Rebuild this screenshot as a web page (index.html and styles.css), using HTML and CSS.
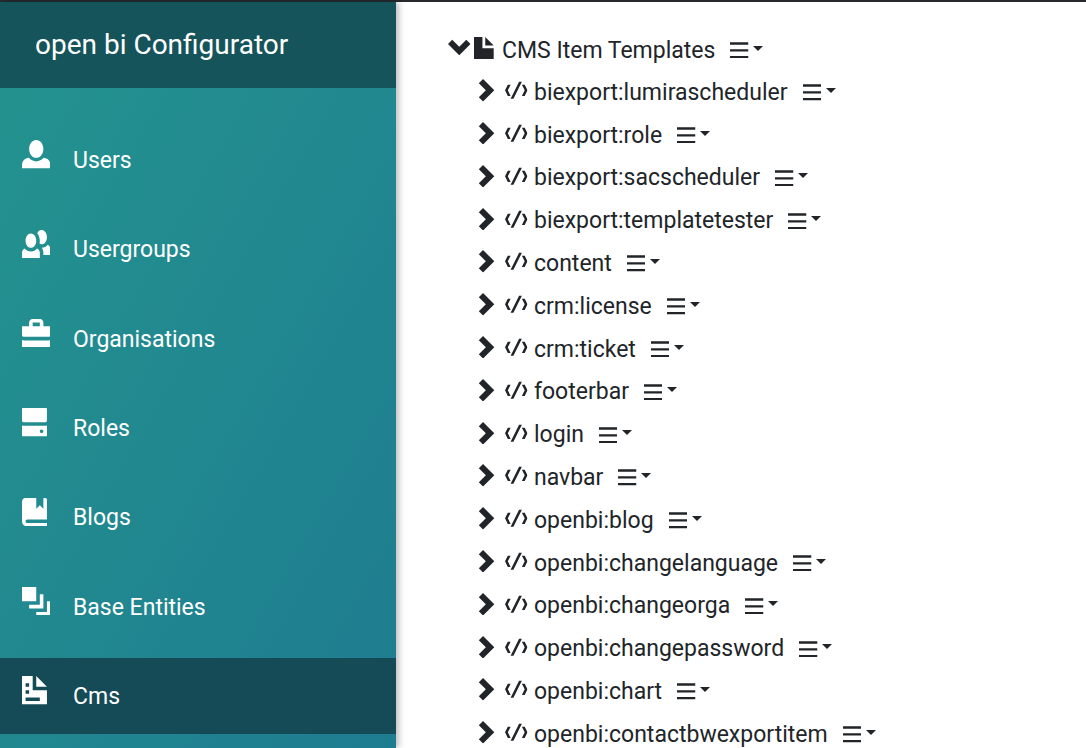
FILE: index.html
```html
<!DOCTYPE html>
<html lang="en">
<head>
    <meta charset="UTF-8">
    <meta name="viewport" content="width=device-width, initial-scale=1.0">
    <title>open bi Configurator</title>
    <link rel="stylesheet" href="styles.css">
</head>
<body>
    <svg class="icon-defs" aria-hidden="true">
        <symbol id="i-person" viewBox="0 0 8 8"><path d="M4 0c-1.1 0-2 1.12-2 2.5s.9 2.5 2 2.5 2-1.12 2-2.5-.9-2.5-2-2.5zm-2.09 5c-1.06.05-1.91.92-1.91 2v1h8v-1c0-1.08-.84-1.95-1.91-2-.54.61-1.28 1-2.09 1-.81 0-1.55-.39-2.09-1z"/></symbol>
        <symbol id="i-people" viewBox="0 0 8 8"><path d="M5.5 0c-.51 0-.95.35-1.22.88.45.54.72 1.28.72 2.13 0 .29-.03.55-.09.81.17.11.38.19.59.19.83 0 1.5-.9 1.5-2s-.67-2-1.5-2zm-3 1c-.83 0-1.5.9-1.5 2s.67 2 1.5 2 1.5-.9 1.5-2-.67-2-1.5-2zm4.75 3.16c-.43.51-1.02.82-1.69.84.27.38.44.84.44 1.34v.66h2v-1.66c0-.52-.31-.97-.75-1.19zm-6.5 1c-.44.22-.75.67-.75 1.19v1.66h5v-1.66c0-.52-.31-.97-.75-1.19-.45.53-1.06.84-1.75.84s-1.3-.32-1.75-.84z"/></symbol>
        <symbol id="i-briefcase" viewBox="0 0 8 8"><path d="M3 0c-.55 0-1 .45-1 1v1h-2v2.5c0 .28.22.5.5.5h7c.28 0 .5-.22.5-.5v-2.5h-2v-1c0-.55-.45-1-1-1h-2zm0 1h2v1h-2v-1zm-3 4.91v2.09h8v-2.09c-.16.06-.32.09-.5.09h-7c-.18 0-.34-.04-.5-.09z"/></symbol>
        <symbol id="i-drive" viewBox="0 0 8 8"><path d="M.19 0c-.11 0-.19.08-.19.19v3.31c0 .28.22.5.5.5h6c.28 0 .5-.22.5-.5v-3.31c0-.11-.08-.19-.19-.19h-6.63zm-.19 4.91v2.91c0 .11.08.19.19.19h6.63c.11 0 .19-.08.19-.19v-2.91c-.16.06-.32.09-.5.09h-6c-.18 0-.34-.04-.5-.09zm5.5 1.09c.28 0 .5.22.5.5s-.22.5-.5.5-.5-.22-.5-.5.22-.5.5-.5z"/></symbol>
        <symbol id="i-book" viewBox="0 0 8 8"><path d="M1 0c-.07 0-.13.01-.19.03-.39.08-.7.39-.78.78-.03.06-.03.12-.03.19v5.5c0 .83.67 1.5 1.5 1.5h5.5v-1h-5.5c-.28 0-.5-.22-.5-.5s.22-.5.5-.5h5.5v-5.5c0-.28-.22-.5-.5-.5h-.5v3l-1-1-1 1v-3h-3z"/></symbol>
        <symbol id="i-layers" viewBox="0 0 8 8"><path d="M0 0v4h4v-4h-4zm5 2v3h-3v1h4v-4h-1zm2 2v3h-3v1h4v-4h-1z"/></symbol>
        <symbol id="i-document" viewBox="0 0 8 8"><path d="M0 0v8h7v-4h-4v-4h-3zm4 0v3h3l-3-3zm-3 2h1v1h-1v-1zm0 2h1v1h-1v-1zm0 2h4v1h-4v-1z"/></symbol>
        <symbol id="i-file" viewBox="0 0 8 8"><path d="M0 0v8h7v-4h-4v-4h-3zm4 0v3h3l-3-3z"/></symbol>
        <symbol id="i-down" viewBox="0 0 8 8"><path d="M1.5 1l-1.5 1.5 4 4 4-4-1.5-1.5-2.5 2.5-2.5-2.5z"/></symbol>
        <symbol id="i-right" viewBox="0 0 8 8"><path d="M2.5 0l-1.5 1.5 2.5 2.5-2.5 2.5 1.5 1.5 4-4-4-4z"/></symbol>
        <symbol id="i-code" viewBox="0 0 8 8"><path d="M5 1l-3 6h1l3-6h-1zm-4 1l-1 2 1 2h1l-1-2 1-2h-1zm5 0l1 2-1 2h1l1-2-1-2h-1z"/></symbol>
        <symbol id="i-menu" viewBox="0 0 8 8"><path d="M0 1v1h8v-1h-8zm0 2.97v1h8v-1h-8zm0 3v1h8v-1h-8z"/></symbol>
    </svg>

    <div class="topline"></div>
    <div class="wrapper">
        <nav class="sidebar">
            <div class="sidebar-header">open bi Configurator</div>
            <ul class="side-menu">
                <li class="side-item"><svg class="side-icon"><use href="#i-person"/></svg>Users</li>
                <li class="side-item"><svg class="side-icon"><use href="#i-people"/></svg>Usergroups</li>
                <li class="side-item"><svg class="side-icon"><use href="#i-briefcase"/></svg>Organisations</li>
                <li class="side-item"><svg class="side-icon"><use href="#i-drive"/></svg>Roles</li>
                <li class="side-item"><svg class="side-icon"><use href="#i-book"/></svg>Blogs</li>
                <li class="side-item"><svg class="side-icon"><use href="#i-layers"/></svg>Base Entities</li>
                <li class="side-item active"><svg class="side-icon"><use href="#i-document"/></svg>Cms</li>
            </ul>
        </nav>

        <main class="content">
            <div class="row root">
                <svg class="ico toggle"><use href="#i-down"/></svg>
                <svg class="ico"><use href="#i-file"/></svg>
                <span class="label">CMS Item Templates</span>
                <span class="menu"><svg class="menu-icon"><use href="#i-menu"/></svg><i class="caret"></i></span>
            </div>
            <ul class="tree">
                <li class="row"><svg class="ico toggle"><use href="#i-right"/></svg><svg class="ico"><use href="#i-code"/></svg><span class="label">biexport:lumirascheduler</span><span class="menu"><svg class="menu-icon"><use href="#i-menu"/></svg><i class="caret"></i></span></li>
                <li class="row"><svg class="ico toggle"><use href="#i-right"/></svg><svg class="ico"><use href="#i-code"/></svg><span class="label">biexport:role</span><span class="menu"><svg class="menu-icon"><use href="#i-menu"/></svg><i class="caret"></i></span></li>
                <li class="row"><svg class="ico toggle"><use href="#i-right"/></svg><svg class="ico"><use href="#i-code"/></svg><span class="label">biexport:sacscheduler</span><span class="menu"><svg class="menu-icon"><use href="#i-menu"/></svg><i class="caret"></i></span></li>
                <li class="row"><svg class="ico toggle"><use href="#i-right"/></svg><svg class="ico"><use href="#i-code"/></svg><span class="label">biexport:templatetester</span><span class="menu"><svg class="menu-icon"><use href="#i-menu"/></svg><i class="caret"></i></span></li>
                <li class="row"><svg class="ico toggle"><use href="#i-right"/></svg><svg class="ico"><use href="#i-code"/></svg><span class="label">content</span><span class="menu"><svg class="menu-icon"><use href="#i-menu"/></svg><i class="caret"></i></span></li>
                <li class="row"><svg class="ico toggle"><use href="#i-right"/></svg><svg class="ico"><use href="#i-code"/></svg><span class="label">crm:license</span><span class="menu"><svg class="menu-icon"><use href="#i-menu"/></svg><i class="caret"></i></span></li>
                <li class="row"><svg class="ico toggle"><use href="#i-right"/></svg><svg class="ico"><use href="#i-code"/></svg><span class="label">crm:ticket</span><span class="menu"><svg class="menu-icon"><use href="#i-menu"/></svg><i class="caret"></i></span></li>
                <li class="row"><svg class="ico toggle"><use href="#i-right"/></svg><svg class="ico"><use href="#i-code"/></svg><span class="label">footerbar</span><span class="menu"><svg class="menu-icon"><use href="#i-menu"/></svg><i class="caret"></i></span></li>
                <li class="row"><svg class="ico toggle"><use href="#i-right"/></svg><svg class="ico"><use href="#i-code"/></svg><span class="label">login</span><span class="menu"><svg class="menu-icon"><use href="#i-menu"/></svg><i class="caret"></i></span></li>
                <li class="row"><svg class="ico toggle"><use href="#i-right"/></svg><svg class="ico"><use href="#i-code"/></svg><span class="label">navbar</span><span class="menu"><svg class="menu-icon"><use href="#i-menu"/></svg><i class="caret"></i></span></li>
                <li class="row"><svg class="ico toggle"><use href="#i-right"/></svg><svg class="ico"><use href="#i-code"/></svg><span class="label">openbi:blog</span><span class="menu"><svg class="menu-icon"><use href="#i-menu"/></svg><i class="caret"></i></span></li>
                <li class="row"><svg class="ico toggle"><use href="#i-right"/></svg><svg class="ico"><use href="#i-code"/></svg><span class="label">openbi:changelanguage</span><span class="menu"><svg class="menu-icon"><use href="#i-menu"/></svg><i class="caret"></i></span></li>
                <li class="row"><svg class="ico toggle"><use href="#i-right"/></svg><svg class="ico"><use href="#i-code"/></svg><span class="label">openbi:changeorga</span><span class="menu"><svg class="menu-icon"><use href="#i-menu"/></svg><i class="caret"></i></span></li>
                <li class="row"><svg class="ico toggle"><use href="#i-right"/></svg><svg class="ico"><use href="#i-code"/></svg><span class="label">openbi:changepassword</span><span class="menu"><svg class="menu-icon"><use href="#i-menu"/></svg><i class="caret"></i></span></li>
                <li class="row"><svg class="ico toggle"><use href="#i-right"/></svg><svg class="ico"><use href="#i-code"/></svg><span class="label">openbi:chart</span><span class="menu"><svg class="menu-icon"><use href="#i-menu"/></svg><i class="caret"></i></span></li>
                <li class="row"><svg class="ico toggle"><use href="#i-right"/></svg><svg class="ico"><use href="#i-code"/></svg><span class="label">openbi:contactbwexportitem</span><span class="menu"><svg class="menu-icon"><use href="#i-menu"/></svg><i class="caret"></i></span></li>
            </ul>
        </main>
    </div>
</body>
</html>
```

FILE: styles.css
```css
html, body {
    height: 100%;
}
body {
    margin: 0;
    overflow: hidden;
    background: #fff;
    color: #212529;
    font-family: Roboto, "Liberation Sans", sans-serif;
}
.icon-defs {
    display: none;
}
.topline {
    height: 2px;
    background: #262a2d;
}
.wrapper {
    display: flex;
    height: 746px;
}
.sidebar {
    flex: 0 0 396px;
    background: linear-gradient(120deg, #24948f 0%, #1e7c90 100%);
    color: #fff;
    box-shadow: 3px 0 6px rgba(0, 0, 0, 0.25);
    z-index: 1;
}
.sidebar-header {
    height: 86px;
    padding-left: 35px;
    background: #15545a;
    font-size: 28px;
    line-height: 86px;
}
.side-menu {
    list-style: none;
    margin: 0;
    padding: 34px 0 0;
}
.side-item {
    display: flex;
    align-items: center;
    box-sizing: border-box;
    height: 76px;
    margin-bottom: 13.33px;
    padding: 1px 0 0 21.5px;
    font-size: 23px;
}
.side-item.active {
    background: #144b57;
}
.side-icon {
    width: 28.5px;
    height: 28.5px;
    margin-right: 23px;
    margin-top: -12px;
    fill: #fff;
}
.content {
    flex: 1;
    padding: 27px 0 0 52px;
    font-size: 23px;
}
.tree {
    list-style: none;
    margin: 0;
    padding: 0 0 0 28px;
}
.row {
    display: flex;
    align-items: center;
    height: 42.8px;
}
.row.root {
    height: 42px;
}
.ico {
    width: 22.5px;
    height: 22.5px;
    margin-top: -4px;
    margin-right: 6px;
    fill: #212529;
}
.tree .ico {
    margin-right: 6.5px;
}
.root .ico.toggle {
    margin-right: 3px;
}
.label {
    margin-right: 15px;
    white-space: nowrap;
}
.menu {
    display: flex;
    align-items: center;
}
.menu-icon {
    width: 18.5px;
    height: 18.5px;
    margin-top: -2px;
    fill: #212529;
}
.caret {
    width: 0;
    height: 0;
    margin-left: 4.5px;
    margin-top: -4px;
    border-top: 5.4px solid #212529;
    border-left: 5.4px solid transparent;
    border-right: 5.4px solid transparent;
}
```
